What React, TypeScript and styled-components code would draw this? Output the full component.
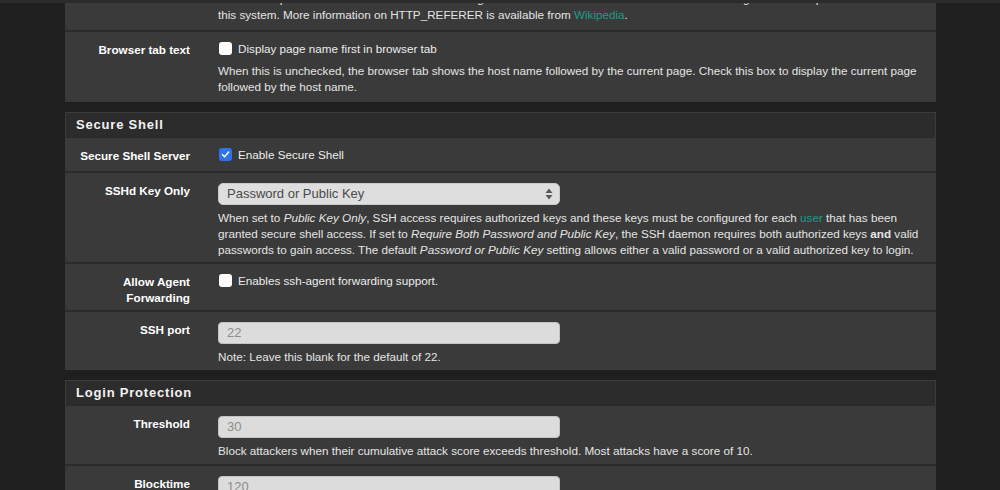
import styled, { createGlobalStyle } from "styled-components";

const GlobalStyle = createGlobalStyle`
	html, body {
		margin: 0;
		padding: 0;
		background: #1f1f1f;
		height: 490px;
		overflow: hidden;
	}
	body {
		font-family: "Liberation Sans", Arial, sans-serif;
		font-size: 11.7px;
		line-height: 16px;
		color: #e4e4e4;
	}
`;

const NavEdge = styled.div`
	position: fixed;
	top: 0;
	left: 0;
	right: 0;
	height: 3px;
	background: #2b2b2d;
	z-index: 2;
`;

const Wrapper = styled.div`
	width: 871px;
	margin: -9px 0 0 65px;
`;

const Panel = styled.section`
	background: #3a3a3a;
	margin-bottom: 10px;
`;

const PanelHeading = styled.h2`
	margin: 0;
	height: 24px;
	padding: 0 10px;
	display: flex;
	align-items: center;
	background: #2c2c2c;
	border: 1px solid #3c3c3c;
	border-bottom-color: #2a2a2a;
	font-size: 13px;
	font-weight: bold;
	letter-spacing: 0.8px;
	color: #f2f2f2;
`;

const Row = styled.div<{ $pb?: number; $pt?: number }>`
	display: grid;
	grid-template-columns: 145px 1fr;
	padding: ${(p) => p.$pt ?? 10}px 0 ${(p) => p.$pb ?? 4}px;
	& + & {
		border-top: 2px solid #2b2b2b;
	}
`;

const Label = styled.div`
	padding-right: 20px;
	text-align: right;
	font-weight: bold;
	color: #ffffff;
`;

const Control = styled.div`
	padding: 0 8px;
`;

const CheckLine = styled.label`
	display: flex;
	align-items: center;
	gap: 6px;
	height: 19px;
	margin-top: -2px;
	padding-bottom: 2px;
	box-sizing: border-box;
	color: #ececec;
`;

const Box = styled.span<{ $checked?: boolean }>`
	display: inline-flex;
	align-items: center;
	justify-content: center;
	width: 13px;
	height: 13px;
	margin-left: 1px;
	border-radius: 3px;
	background: ${(p) => (p.$checked ? "#2e72ee" : "#ffffff")};
	box-sizing: border-box;
`;

const Help = styled.div<{ $after?: "check" | "field" }>`
	margin-top: ${(p) => (p.$after === "field" ? "5px" : "4px")};
	margin-bottom: ${(p) => (p.$after === "field" ? "0" : "3px")};
	color: #e4e4e4;
`;

const CutHelp = styled(Help)`
	margin-top: 0;
	padding-bottom: 0;
	white-space: nowrap;
`;

const Link = styled.a`
	color: #1f9b8b;
	text-decoration: none;
`;

const Select = styled.div`
	position: relative;
	display: flex;
	align-items: center;
	width: 342px;
	height: 22px;
	padding: 0 8px;
	box-sizing: border-box;
	background: #dedede;
	border: 1px solid #c8c8c8;
	border-radius: 5px;
	font-size: 13px;
	color: #4a4a4a;
`;

const Arrows = styled.svg`
	position: absolute;
	right: 6px;
	top: 4px;
`;

const Input = styled.div`
	display: flex;
	align-items: center;
	width: 342px;
	height: 22px;
	padding: 0 8px;
	box-sizing: border-box;
	background: #dcdcdc;
	border: 1px solid #c4c4c4;
	border-radius: 4px;
	font-size: 13px;
	color: #8c8c8c;
`;

function Checkbox({ checked, children }: { checked?: boolean; children: React.ReactNode }) {
	return (
		<CheckLine>
			<Box $checked={checked}>
				{checked && (
					<svg width="9" height="9" viewBox="0 0 9 9">
						<path d="M1.5 4.8 L3.6 6.8 L7.6 2" stroke="#fff" strokeWidth="1.5" fill="none" strokeLinecap="round" strokeLinejoin="round" />
					</svg>
				)}
			</Box>
			{children}
		</CheckLine>
	);
}

function App() {
	return (
		<>
			<GlobalStyle />
			<NavEdge />
			<Wrapper>
				<Panel>
					<Row $pt={0}>
						<Label />
						<Control>
							<CutHelp>
								disable this protection if it interferes with webConfigurator access in certain corner cases such as using external scripts to interact with
								<br />
								this system. More information on HTTP_REFERER is available from <Link href="#">Wikipedia</Link>.
							</CutHelp>
						</Control>
					</Row>
					<Row>
						<Label>Browser tab text</Label>
						<Control>
							<Checkbox>Display page name first in browser tab</Checkbox>
							<Help>
								When this is unchecked, the browser tab shows the host name followed by the current page. Check this box to display the current page followed by the host name.
							</Help>
						</Control>
					</Row>
				</Panel>

				<Panel>
					<PanelHeading>Secure Shell</PanelHeading>
					<Row $pb={6}>
						<Label>Secure Shell Server</Label>
						<Control>
							<Checkbox checked>Enable Secure Shell</Checkbox>
						</Control>
					</Row>
					<Row>
						<Label>SSHd Key Only</Label>
						<Control>
							<Select>
								Password or Public Key
								<Arrows width="8" height="12" viewBox="0 0 8 12">
									<path d="M4 0.5 L7.5 5 L0.5 5 Z" fill="#5a5a5a" />
									<path d="M4 11.5 L7.5 7 L0.5 7 Z" fill="#5a5a5a" />
								</Arrows>
							</Select>
							<Help $after="field">
								When set to <i>Public Key Only</i>, SSH access requires authorized keys and these keys must be configured for each <Link href="#">user</Link> that has been granted secure shell access. If set to <i>Require Both Password and Public Key</i>, the SSH daemon requires both authorized keys <b>and</b> valid passwords to gain access. The default <i>Password or Public Key</i> setting allows either a valid password or a valid authorized key to login.
							</Help>
						</Control>
					</Row>
					<Row>
						<Label>
							Allow Agent
							<br />
							Forwarding
						</Label>
						<Control>
							<Checkbox>Enables ssh-agent forwarding support.</Checkbox>
						</Control>
					</Row>
					<Row $pb={5}>
						<Label>SSH port</Label>
						<Control>
							<Input>22</Input>
							<Help $after="field">Note: Leave this blank for the default of 22.</Help>
						</Control>
					</Row>
				</Panel>

				<Panel>
					<PanelHeading>Login Protection</PanelHeading>
					<Row $pb={5}>
						<Label>Threshold</Label>
						<Control>
							<Input>30</Input>
							<Help $after="field">
								Block attackers when their cumulative attack score exceeds threshold. Most attacks have a score of 10.
							</Help>
						</Control>
					</Row>
					<Row>
						<Label>Blocktime</Label>
						<Control>
							<Input>120</Input>
							<Help $after="field">
								Attackers will be blocked for this many seconds.
							</Help>
						</Control>
					</Row>
				</Panel>
			</Wrapper>
		</>
	);
}

export default App;
